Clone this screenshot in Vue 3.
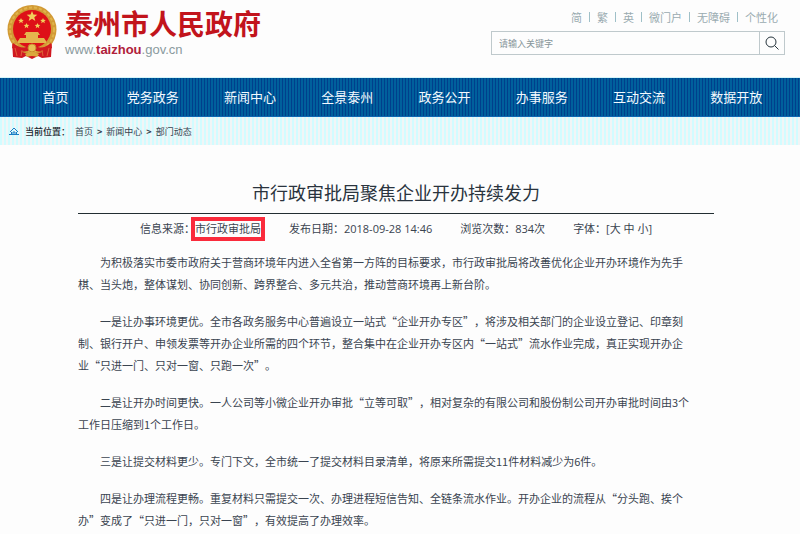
<script setup>
const tools = ['简', '繁', '英', '微门户', '无障碍', '个性化']
const nav = ['首页', '党务政务', '新闻中心', '全景泰州', '政务公开', '办事服务', '互动交流', '数据开放']
const crumbs = ['首页', '新闻中心', '部门动态']
const paragraphs = [
  '为积极落实市委市政府关于营商环境年内进入全省第一方阵的目标要求，市行政审批局将改善优化企业开办环境作为先手棋、当头炮，整体谋划、协同创新、跨界整合、多元共治，推动营商环境再上新台阶。',
  '一是让办事环境更优。全市各政务服务中心普遍设立一站式“企业开办专区”，将涉及相关部门的企业设立登记、印章刻制、银行开户、申领发票等开办企业所需的四个环节，整合集中在企业开办专区内“一站式”流水作业完成，真正实现开办企业“只进一门、只对一窗、只跑一次”。',
  '二是让开办时间更快。一人公司等小微企业开办审批“立等可取”，相对复杂的有限公司和股份制公司开办审批时间由3个工作日压缩到1个工作日。',
  '三是让提交材料更少。专门下文，全市统一了提交材料目录清单，将原来所需提交11件材料减少为6件。',
  '四是让办理流程更畅。重复材料只需提交一次、办理进程短信告知、全链条流水作业。开办企业的流程从“分头跑、挨个办”变成了“只进一门，只对一窗”，有效提高了办理效率。'
]
</script>

<template>
  <div class="page" lang="zh-CN">
    <header class="header">
      <a class="brand" href="#">
        <svg class="emblem" viewBox="0 0 50 54" aria-hidden="true">
          <path d="M5 36 6 52l9 1 4-2 6 3 6-3 4 2 9-1 1-16Z" fill="#d01820" />
          <circle cx="25" cy="24.500" r="24.500" fill="#d29a35" />
          <circle cx="25" cy="24.500" r="22" fill="none" stroke="#e0b44a" stroke-width="2" stroke-dasharray="3 2" />
          <circle cx="25" cy="24" r="19" fill="#de1018" />
          <path d="m25 6 1.400 3.600 3.900.2-3 2.400 1 3.800-3.300-2.200-3.300 2.200 1-3.800-3-2.400 3.900-.2Z" fill="#f2cf5b" />
          <path d="m14 13 .8 1.800 2 .1-1.500 1.300.5 2-1.800-1.100-1.800 1.100.5-2-1.500-1.300 2-.1ZM36 13l.8 1.800 2 .1-1.500 1.300.5 2-1.800-1.100-1.800 1.100.5-2-1.500-1.300 2-.1ZM19.500 18l.8 1.800 2 .1-1.500 1.300.5 2-1.800-1.100-1.800 1.100.5-2-1.500-1.300 2-.1ZM30.500 18l.8 1.800 2 .1-1.500 1.300.5 2-1.800-1.100-1.800 1.100.5-2-1.500-1.300 2-.1Z" fill="#f2cf5b" />
          <path d="M19 27h12l2 3h-2v3h6l2 3v2H11v-2l2-3h6v-3h-2Z" fill="#e5b64e" />
          <path d="M6 38q8 6 13 4l2-2h8l2 2q5 2 13-4l1 5q-9 5-15 3h-10q-6 2-15-3Z" fill="#d21a20" />
          <circle cx="25" cy="43" r="4" fill="#e8c055" stroke="#c98a2b" />
          <path d="M18 49q7-4 14 0l-2 3q-5-2-10 0Z" fill="#dba83c" />
          <path d="M8 43l2 8M42 43l-2 8M15 45l-1 6M35 45l1 6" stroke="#e06038" />
        </svg>
        <span class="brand-text">
          <span class="brand-name">泰州市人民政府</span>
          <span class="brand-url">www.<b>taizhou</b>.gov.cn</span>
        </span>
      </a>
      <div class="side">
        <ul class="tools">
          <li v-for="t in tools" :key="t"><a href="#">{{ t }}</a></li>
        </ul>
        <form class="search" @submit.prevent>
          <input type="text" placeholder="请输入关键字" aria-label="请输入关键字" />
          <button type="submit" aria-label="搜索">
            <svg viewBox="0 0 14 14" aria-hidden="true">
              <circle cx="6" cy="6" r="5" /><path d="m9.500 9.500 4 4" />
            </svg>
          </button>
        </form>
      </div>
    </header>

    <nav class="nav">
      <a v-for="n in nav" :key="n" href="#">{{ n }}</a>
    </nav>

    <div class="crumbs">
      <svg viewBox="0 0 10 8" aria-hidden="true"><path d="M0 7.500h10M1 5l4-4 4 4M2.500 5v2M7.500 5v2M4 7V5h2v2" /></svg>
      <strong>当前位置：</strong>
      <template v-for="(c, i) in crumbs" :key="c">
        <span v-if="i" class="sep">&gt;</span>
        <a href="#">{{ c }}</a>
      </template>
    </div>

    <main class="article">
      <h1>市行政审批局聚焦企业开办持续发力</h1>
      <div class="meta">
        <span class="source">信息来源：<mark>市行政审批局</mark></span>
        <span>发布日期：2018-09-28 14:46</span>
        <span>浏览次数：834次</span>
        <span>字体：[<a href="#">大</a> <a href="#">中</a> <a href="#">小</a>]</span>
      </div>
      <div class="body">
        <p v-for="p in paragraphs" :key="p">{{ p }}</p>
      </div>
    </main>
  </div>
</template>

<style>
body {
  margin: 0;
  background: #fdfdfd;
}
</style>

<style scoped>
.page {
  font-family: "Noto Sans CJK SC", "Noto Sans", sans-serif;
  font-weight: 400;
  color: #3a4450;
  text-spacing-trim: space-all;
}
a {
  color: inherit;
  text-decoration: none;
}
.header {
  display: flex;
  justify-content: space-between;
  padding: 0 15px 18px 7px;
  border-bottom: 1px solid #d5f5fa;
}
.brand {
  display: flex;
  gap: 8px;
  padding-top: 3px;
}
.emblem {
  width: 50px;
  height: 54px;
  margin-top: 2px;
}
.brand-text {
  display: flex;
  flex-direction: column;
}
.brand-name {
  font-size: 28px;
  line-height: 40px;
  font-weight: 700;
  color: #c2141c;
}
.brand-url {
  font: 13px/14px "Liberation Sans", sans-serif;
  color: #8a9a9e;
}
.brand-url b {
  color: #b0203a;
}
.side {
  display: flex;
  flex-direction: column;
  width: 294px;
  padding-top: 9px;
}
.tools {
  display: flex;
  justify-content: flex-end;
  margin: 0;
  padding: 0 7px 0 0;
  list-style: none;
  font-size: 11px;
  line-height: 16px;
  color: #9aabb0;
}
.tools li {
  display: flex;
  align-items: center;
}
.tools li + li::before {
  content: "";
  width: 1px;
  height: 10px;
  margin: 0 7px;
  background: #9fc0c8;
}
.search {
  display: flex;
  height: 24px;
  margin-top: 6px;
  border: 1px solid #bfc9cc;
  box-sizing: border-box;
}
.search input {
  flex: 1;
  min-width: 0;
  padding: 0 7px;
  border: 0;
  background: transparent;
  font: inherit;
  font-size: 9px;
  outline: none;
}
.search input::placeholder {
  color: #87959a;
  opacity: 1;
}
.search button {
  display: flex;
  align-items: center;
  justify-content: center;
  width: 25px;
  padding: 0;
  border: 0;
  border-left: 1px solid #bfc9cc;
  background: transparent;
}
.search svg {
  width: 14px;
  height: 14px;
  fill: none;
  stroke: #26343c;
}
.nav {
  display: grid;
  grid-template-columns: repeat(8, 1fr);
  padding: 0 15px 0 7px;
  border-bottom: 1px solid #1068b4;
  background: repeating-linear-gradient(90deg, #003f8c 0 1px, #00609c 1px 3px);
  color: #f4faff;
  font-size: 13px;
  line-height: 38px;
  text-align: center;
}
.crumbs {
  display: flex;
  align-items: center;
  gap: 4px;
  height: 28px;
  padding: 0 9px;
  background: repeating-linear-gradient(90deg, #d2fcff 0 2px, #f1f5f6 2px 4px);
  font-size: 9px;
}
.crumbs svg {
  width: 10px;
  height: 8px;
  margin-right: 2px;
  fill: none;
  stroke: #1c7cc4;
}
.crumbs strong {
  margin-right: 1px;
  font-weight: 500;
  color: #1c242c;
}
.sep {
  font-weight: 700;
}
.article {
  padding: 34px 86px 0 78px;
}
h1 {
  margin: 0;
  padding-bottom: 8px;
  border-bottom: 1px solid #222e32;
  font-size: 18px;
  line-height: 26px;
  font-weight: 400;
  color: #2a343e;
  text-align: center;
}
.meta {
  display: flex;
  justify-content: center;
  gap: 28px;
  font-family: "Open Sans", "Noto Sans CJK SC", sans-serif;
  font-size: 11px;
  line-height: 29px;
}
.source {
  display: flex;
  align-items: center;
}
mark {
  margin: 0 -4px;
  border: 4px solid #fa2b3c;
  background: transparent;
  color: inherit;
  line-height: 16px;
}
.body {
  width: 614px;
  max-width: 100%;
  padding-top: 8px;
  font-size: 11px;
  line-height: 22px;
}
.body p {
  margin: 0 0 15px;
  text-indent: 2em;
}
</style>
